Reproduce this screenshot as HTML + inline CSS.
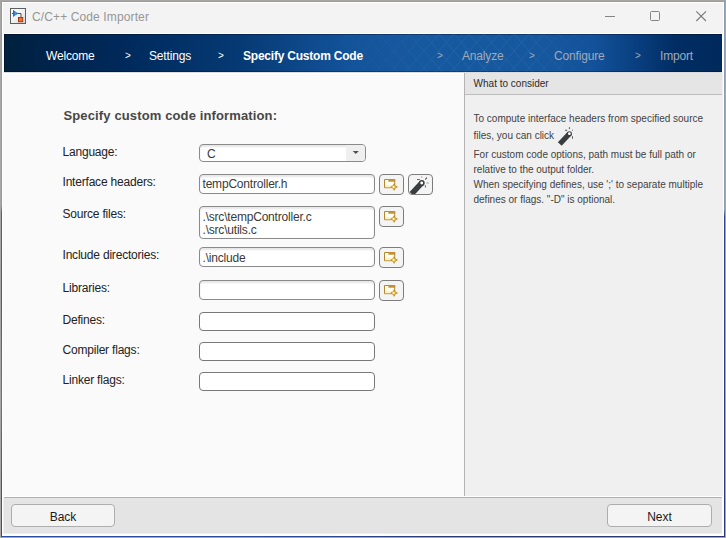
<!DOCTYPE html>
<html>
<head>
<meta charset="utf-8">
<title>C/C++ Code Importer</title>
<style>
html,body{margin:0;padding:0;}
body{width:726px;height:538px;overflow:hidden;background:#a8a6a4;font-family:"Liberation Sans",sans-serif;font-size:12px;color:#1a1a1a;position:relative;}
.abs{position:absolute;}
#win{left:2px;top:2px;width:722px;height:534px;background:#fff;}
#tbar{left:3px;top:3px;width:720px;height:30px;background:#f3f3f3;}
#frameT{left:1px;top:1px;width:724px;height:1px;background:#8a9eb4;}
#frameL{left:1px;top:1px;width:1px;height:536px;background:linear-gradient(#8a9eb4 0,#8a9eb4 204px,#3a64aa 212px,#3560a8 300px,#4180b5 400px,#2f5aaa 480px,#2b4fa8 536px);}
#frameR{left:724px;top:1px;width:1px;height:536px;background:linear-gradient(#8a9eb4 0,#8a9eb4 208px,#2e4488 216px,#2a3a78 536px);}
#frameB{left:1px;top:536px;width:724px;height:1px;background:linear-gradient(90deg,#2b4fa8,#2c4a9a 45%,#2a3a78 60%,#28366f);}
#inner{left:4px;top:72px;width:718px;height:1px;background:#dcdcdc;}
#title{left:32px;top:10px;font-size:12px;color:#969696;white-space:nowrap;letter-spacing:0.12px;}
#banner{left:4px;top:34px;width:718px;height:38px;box-shadow:inset 1px 1px 0 rgba(0,0,30,0.35),inset 0 -1px 0 rgba(0,0,30,0.3);background:linear-gradient(90deg,#00213d 0%,#00244e 8%,#002a5c 17%,#063a74 33%,#13539a 48%,#17599f 58%,#16589e 74%,#13529a 82%,#093f80 88%,#012d63 93.5%,#002a5c 100%);}
.step{top:49px;color:#fff;font-size:12px;white-space:nowrap;line-height:14px;letter-spacing:-0.17px;}
.gt{top:49px;color:#fff;font-size:10px;white-space:nowrap;line-height:14px;}
.dim{color:#a0aab8;}
#left{left:3px;top:74px;width:461px;height:422px;background:#fafafa;}
#right{left:465px;top:73px;width:258px;height:423px;background:#f0f0f0;}
#vdiv{left:464px;top:73px;width:1px;height:423px;background:#b4b4b4;}
#rhead{left:465px;top:73px;width:257px;height:21px;background:#e5e5e5;border-bottom:1px solid #bdbdbd;}
#rheadt{left:473.600px;top:78px;font-size:10px;color:#2b2b2b;white-space:nowrap;}
.rt{left:473.500px;font-size:10px;color:#424242;white-space:nowrap;line-height:12px;}
#bottom{left:3px;top:498px;width:719px;height:36px;box-shadow:inset 1px -1px 0 #ededed;background:#e4e4e4;}
#bline{left:4px;top:497px;width:718px;height:1px;background:#b0b0b0;}
.btn{height:21px;border:1px solid #adadad;border-radius:4px;background:#f4f4f4;text-align:center;line-height:24px;font-size:12px;color:#1a1a1a;box-sizing:border-box;}
.lbl{left:62.5px;font-size:12px;color:#222;white-space:nowrap;line-height:14px;letter-spacing:-0.2px;}
.inp{left:199px;width:176px;height:20px;border:1px solid #8a8a8a;border-radius:4px;background:#fff;box-sizing:border-box;font-size:12px;color:#3a3a3a;line-height:14px;white-space:nowrap;letter-spacing:-0.2px;box-shadow:inset 0 2px 2px rgba(0,0,0,0.10);}
.pl{height:19px;border-color:#787878;box-shadow:none;}
.inp span{position:absolute;left:2.500px;top:2px;}
.ib{width:25px;height:21px;border:1px solid #7d7d7d;border-radius:4px;background:#f4f4f4;box-sizing:border-box;}
#h1{left:63.500px;top:108px;font-size:13px;font-weight:bold;color:#474747;white-space:nowrap;letter-spacing:0.13px;line-height:15px;}
</style>
</head>
<body>
<div id="win" class="abs"></div>
<div id="tbar" class="abs"></div>
<div id="inner" class="abs"></div>
<div id="frameT" class="abs"></div>
<div id="frameL" class="abs"></div>
<div id="frameR" class="abs"></div>
<div id="frameB" class="abs"></div>

<!-- title bar -->
<svg class="abs" style="left:10px;top:8px" width="16" height="16" viewBox="0 0 16 16">
  <defs><linearGradient id="ig" x1="0" y1="0" x2="1" y2="1"><stop offset="0" stop-color="#ffffff"/><stop offset="0.5" stop-color="#f2f2f2"/><stop offset="1" stop-color="#d4d4d4"/></linearGradient>
  <linearGradient id="tg" x1="0" y1="0" x2="1" y2="0"><stop offset="0" stop-color="#1565c0"/><stop offset="0.5" stop-color="#3d9be8"/><stop offset="1" stop-color="#0d4fa0"/></linearGradient></defs>
  <rect x="0.5" y="0.5" width="15" height="15" fill="url(#ig)" stroke="#5a5f60"/>
  <path d="M2 5.500h2M7.500 5.500h3.500v3.500" stroke="#505456" fill="none"/>
  <path d="M3 1.800L8.200 5.500 3 9z" fill="url(#tg)"/>
  <rect x="8.500" y="9.500" width="4.200" height="4.200" fill="#f07a1a" stroke="#a8341a"/>
</svg>
<div id="title" class="abs">C/C++ Code Importer</div>
<svg class="abs" style="left:600px;top:8px" width="120" height="18" viewBox="0 0 120 18">
  <path d="M5 8.500h10" stroke="#858585" stroke-width="1" fill="none"/>
  <rect x="50.500" y="3.500" width="9" height="9" rx="1" fill="none" stroke="#858585"/>
  <path d="M96.300 3.300l9.700 9.700M106 3.300l-9.700 9.700" stroke="#7a7a7a" stroke-width="1.100" fill="none"/>
</svg>

<!-- banner -->
<div id="banner" class="abs"></div>
<svg class="abs" style="left:4px;top:34px" width="718" height="38" viewBox="0 0 718 38">
  <defs>
    <pattern id="mesh" width="15" height="17" patternUnits="userSpaceOnUse">
      <path d="M0 0L15 17M15 0L0 17" stroke="#fff" stroke-width="0.8" fill="none"/>
    </pattern>
    <linearGradient id="mg" x1="0" y1="0" x2="1" y2="0">
      <stop offset="0.42" stop-color="#fff" stop-opacity="0"/>
      <stop offset="0.62" stop-color="#fff" stop-opacity="0.07"/>
      <stop offset="0.74" stop-color="#fff" stop-opacity="0.07"/>
      <stop offset="0.84" stop-color="#fff" stop-opacity="0"/>
    </linearGradient>
    <mask id="mm"><rect width="718" height="38" fill="url(#mg)"/></mask>
  </defs>
  <rect width="718" height="38" fill="url(#mesh)" mask="url(#mm)"/>
</svg>
<div class="abs step" style="left:46px">Welcome</div>
<div class="abs gt" style="left:125px">&gt;</div>
<div class="abs step" style="left:149px">Settings</div>
<div class="abs gt" style="left:218px">&gt;</div>
<div class="abs step" style="left:243px;font-weight:bold;letter-spacing:-0.22px">Specify Custom Code</div>
<div class="abs gt dim" style="left:437px">&gt;</div>
<div class="abs step dim" style="left:462px">Analyze</div>
<div class="abs gt dim" style="left:529px">&gt;</div>
<div class="abs step dim" style="left:554px">Configure</div>
<div class="abs gt dim" style="left:635px">&gt;</div>
<div class="abs step dim" style="left:660px">Import</div>

<!-- panels -->
<div id="left" class="abs"></div>
<div id="right" class="abs"></div>
<div id="vdiv" class="abs"></div>
<div id="rhead" class="abs"></div>
<div id="rheadt" class="abs">What to consider</div>
<div class="abs rt" style="top:113px">To compute interface headers from specified source</div>
<div class="abs rt" style="top:130px">files, you can click</div>
<div class="abs rt" style="top:149px">For custom code options, path must be full path or</div>
<div class="abs rt" style="top:164px">relative to the output folder.</div>
<div class="abs rt" style="top:179px">When specifying defines, use ';' to separate multiple</div>
<div class="abs rt" style="top:194px">defines or flags. "-D" is optional.</div>

<!-- form -->
<div id="h1" class="abs">Specify custom code information:</div>
<div class="abs lbl" style="top:145px">Language:</div>
<div class="abs lbl" style="top:175px">Interface headers:</div>
<div class="abs lbl" style="top:207px">Source files:</div>
<div class="abs lbl" style="top:248px">Include directories:</div>
<div class="abs lbl" style="top:281px">Libraries:</div>
<div class="abs lbl" style="top:313px">Defines:</div>
<div class="abs lbl" style="top:343px">Compiler flags:</div>
<div class="abs lbl" style="top:373px">Linker flags:</div>

<div class="abs inp" style="top:144px;width:167px;height:18px;"><span style="left:7px;top:2px">C</span></div>
<div class="abs inp" style="top:174px"><span>tempController.h</span></div>
<div class="abs inp" style="top:206px;height:33px"><span style="top:3px">.\src\tempController.c</span><span style="top:16px">.\src\utils.c</span></div>
<div class="abs inp" style="top:247px"><span style="top:3px">.\include</span></div>
<div class="abs inp" style="top:280px"></div>
<div class="abs inp pl" style="top:312px"></div>
<div class="abs inp pl" style="top:342px"></div>
<div class="abs inp pl" style="top:372px"></div>

<div class="abs ib" style="left:379px;top:174px"></div>
<div class="abs ib" style="left:408px;top:174px"></div>
<div class="abs ib" style="left:379px;top:206px"></div>
<div class="abs ib" style="left:379px;top:247px"></div>
<div class="abs ib" style="left:379px;top:280px"></div>

<svg class="abs" style="left:379px;top:174px" width="25" height="21" viewBox="0 0 25 21">
  <path d="M5.500 5.500h10.200v8.200h-10.200z" fill="#fffdf2" stroke="#b5872c"/>
  <path d="M6 11h9v2.200h-9z" fill="#fff3c6"/>
  <path d="M9.400 5h6.800v2.700h-6.800z" fill="#bf9038"/>
  <path d="M15.100 9.700l1 2.200 2.300 1.100-2.300 1.100-1 2.200-1-2.200-2.300-1.100 2.300-1.100z" fill="#efc53a" stroke="#b8871e" stroke-width=".8" stroke-linejoin="round"/>
  <path d="M14.600 11.400l.5 1.200 1 .4-1.100.5-.5 1-.6-1.100-1.100-.5 1.200-.4z" fill="#fffbe0"/>
</svg>
<svg class="abs" style="left:379px;top:206px" width="25" height="21" viewBox="0 0 25 21">
  <path d="M5.500 5.500h10.200v8.200h-10.200z" fill="#fffdf2" stroke="#b5872c"/>
  <path d="M6 11h9v2.200h-9z" fill="#fff3c6"/>
  <path d="M9.400 5h6.800v2.700h-6.800z" fill="#bf9038"/>
  <path d="M15.100 9.700l1 2.200 2.300 1.100-2.300 1.100-1 2.200-1-2.200-2.300-1.100 2.300-1.100z" fill="#efc53a" stroke="#b8871e" stroke-width=".8" stroke-linejoin="round"/>
  <path d="M14.600 11.400l.5 1.200 1 .4-1.100.5-.5 1-.6-1.100-1.100-.5 1.200-.4z" fill="#fffbe0"/>
</svg>
<svg class="abs" style="left:379px;top:247px" width="25" height="21" viewBox="0 0 25 21">
  <path d="M5.500 5.500h10.200v8.200h-10.200z" fill="#fffdf2" stroke="#b5872c"/>
  <path d="M6 11h9v2.200h-9z" fill="#fff3c6"/>
  <path d="M9.400 5h6.800v2.700h-6.800z" fill="#bf9038"/>
  <path d="M15.100 9.700l1 2.200 2.300 1.100-2.300 1.100-1 2.200-1-2.200-2.300-1.100 2.300-1.100z" fill="#efc53a" stroke="#b8871e" stroke-width=".8" stroke-linejoin="round"/>
  <path d="M14.600 11.400l.5 1.200 1 .4-1.100.5-.5 1-.6-1.100-1.100-.5 1.200-.4z" fill="#fffbe0"/>
</svg>
<svg class="abs" style="left:379px;top:280px" width="25" height="21" viewBox="0 0 25 21">
  <path d="M5.500 5.500h10.200v8.200h-10.200z" fill="#fffdf2" stroke="#b5872c"/>
  <path d="M6 11h9v2.200h-9z" fill="#fff3c6"/>
  <path d="M9.400 5h6.800v2.700h-6.800z" fill="#bf9038"/>
  <path d="M15.100 9.700l1 2.200 2.300 1.100-2.300 1.100-1 2.200-1-2.200-2.300-1.100 2.300-1.100z" fill="#efc53a" stroke="#b8871e" stroke-width=".8" stroke-linejoin="round"/>
  <path d="M14.600 11.400l.5 1.200 1 .4-1.100.5-.5 1-.6-1.100-1.100-.5 1.200-.4z" fill="#fffbe0"/>
</svg>
<svg class="abs" style="left:408px;top:174px" width="25" height="21" viewBox="0 0 25 21">
  <clipPath id="wc"><rect x="1" y="1" width="23" height="19" rx="3"/></clipPath>
  <g clip-path="url(#wc)">
  <path d="M3.600 19.800L13.600 9.200" stroke="#3a3e40" stroke-width="5.600" stroke-linecap="butt" fill="none"/>
  <circle cx="13.800" cy="9" r="2.900" fill="#3a3e40"/>
  </g>
  <circle cx="13.700" cy="9" r="1.450" fill="#fff"/>
  <path d="M9 5.500h2.800" stroke="#555" stroke-width="0.900"/>
  <path d="M13.700 2.200v1.800" stroke="#aaa" stroke-width="0.900"/>
  <path d="M17.300 5.500l1.600-1.800" stroke="#444" stroke-width="1.100"/>
  <path d="M18.500 9h2.300" stroke="#aaa" stroke-width="1.200"/>
  <path d="M17.400 11.200v2.300" stroke="#555" stroke-width="0.900"/>
</svg>
<svg class="abs" style="left:556px;top:125px" width="20" height="22" viewBox="0 0 20 22">
  <path d="M3.800 19L13.400 8.800" stroke="#3a3e40" stroke-width="5.200" stroke-linecap="butt" fill="none"/>
  <circle cx="13.400" cy="8.800" r="2.600" fill="#3a3e40"/>
  <circle cx="13.400" cy="8.700" r="1.400" fill="#fff"/>
  <path d="M9 5.300h2.200" stroke="#444" stroke-width="0.900"/>
  <path d="M13.400 2.200v1.900" stroke="#444" stroke-width="0.900"/>
  <path d="M16.200 5.200h.8" stroke="#444" stroke-width="0.900"/>
  <path d="M16.500 11.300v2.400" stroke="#444" stroke-width="0.900"/>
</svg>
<div class="abs" style="left:346px;top:145px;width:19px;height:16px;background:#efefef;border-radius:0 3px 3px 0"></div>
<svg class="abs" style="left:346px;top:145px" width="19" height="16" viewBox="0 0 19 16"><path d="M6.700 6h6.200l-3.100 3.100z" fill="#505050"/></svg>
<!-- bottom -->
<div id="bline" class="abs"></div>
<div id="bottom" class="abs"></div>
<div class="abs btn" style="left:11px;top:504px;width:104px;height:23px">Back</div>
<div class="abs btn" style="left:607px;top:504px;width:105px;height:23px">Next</div>
</body>
</html>
